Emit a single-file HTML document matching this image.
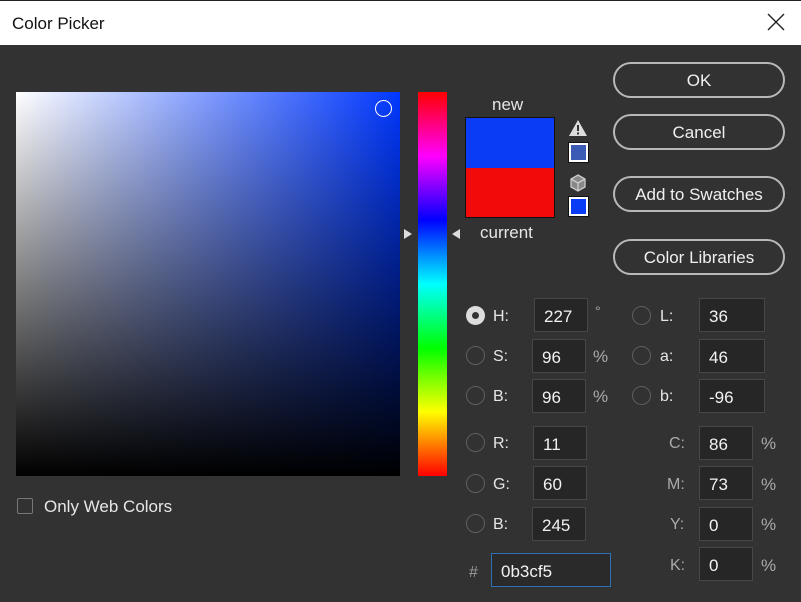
<!DOCTYPE html>
<html><head><style>
*{margin:0;padding:0;box-sizing:border-box}
body{width:801px;height:602px;background:#323232;font-family:"Liberation Sans",sans-serif;position:relative;overflow:hidden;color:#e8e8e8}
.a{position:absolute}
.t{position:absolute;font-size:16px;line-height:18px;color:#e6e6e6;margin-top:2px}
.btn{position:absolute;left:613px;width:172px;height:36px;border:2px solid #b8b8b8;border-radius:18px;text-align:center;line-height:34px;font-size:17px;color:#f0f0f0}
.in{position:absolute;height:34px;background:#262626;border:1px solid #474747;font-size:17px;line-height:35px;padding-left:9px;color:#f2f2f2}
.r{position:absolute;width:19px;height:19px;border:1px solid #5e5e5e;border-radius:50%}
.u{position:absolute;font-size:17px;color:#aaa;margin-top:1px}
</style></head><body>
<div class="a" style="left:0;top:0;width:801px;height:1px;background:#222"></div>
<div class="a" style="left:0;top:1px;width:801px;height:44px;background:#fff"></div>
<div class="a" style="left:12px;top:14px;font-size:17px;color:#111">Color Picker</div>
<svg class="a" style="left:766px;top:12px" width="20" height="20"><path d="M2 2L18 18M18 2L2 18" stroke="#222" stroke-width="1.4"/></svg>

<div class="a" style="left:16px;top:92px;width:384px;height:384px;background:linear-gradient(to bottom,rgba(0,0,0,0),#000),linear-gradient(to right,#fff,#0037ff)"></div>
<div class="a" style="left:375px;top:100px;width:17px;height:17px;border:1.5px solid #fff;border-radius:50%"></div>
<div class="a" style="left:418px;top:92px;width:29px;height:384px;background:linear-gradient(to bottom,#f00,#f0f 16.7%,#00f 33.3%,#0ff 50%,#0f0 66.7%,#ff0 83.3%,#f00)"></div>
<svg class="a" style="left:403px;top:228px" width="60" height="12"><path d="M1 1L9 6L1 11Z" fill="#ddd"/><path d="M57 1L49 6L57 11Z" fill="#ddd"/></svg>

<div class="t" style="left:492px;top:94px;font-size:17px">new</div>
<div class="a" style="left:465px;top:117px;width:90px;height:101px;border:1px solid #111">
<div style="height:50px;background:#0b3cf5"></div><div style="height:49px;background:#f20a0a"></div></div>
<div class="t" style="left:480px;top:222px;font-size:17px">current</div>
<svg class="a" style="left:568px;top:119px" width="20" height="18"><path d="M10 1L19 17H1Z" fill="#ddd"/><rect x="9" y="6" width="2" height="6" fill="#333"/><rect x="9" y="13.5" width="2" height="2" fill="#333"/></svg>
<div class="a" style="left:569px;top:143px;width:19px;height:19px;border:2px solid #fff;outline:1px solid #111;background:#3b5bb5"></div>
<svg class="a" style="left:568px;top:173px" width="20" height="20"><path d="M10 2L17 6V14L10 18L3 14V6Z" fill="#888" stroke="#ccc" stroke-width="1.3"/><path d="M3 6L10 10L17 6M10 10V18" stroke="#ccc" stroke-width="1.3" fill="none"/></svg>
<div class="a" style="left:569px;top:197px;width:19px;height:19px;border:2px solid #fff;outline:1px solid #111;background:#0b3cf5"></div>

<div class="btn" style="top:62px">OK</div>
<div class="btn" style="top:114px">Cancel</div>
<div class="btn" style="top:176px">Add to Swatches</div>
<div class="btn" style="top:239px">Color Libraries</div>

<div class="a" style="left:466px;top:306px;width:19px;height:19px;border-radius:50%;background:#ddd"><div style="margin:6px;width:7px;height:7px;border-radius:50%;background:#333"></div></div>
<div class="r" style="left:466px;top:346px"></div>
<div class="r" style="left:466px;top:386px"></div>
<div class="r" style="left:466px;top:433px"></div>
<div class="r" style="left:466px;top:474px"></div>
<div class="r" style="left:466px;top:514px"></div>
<div class="r" style="left:632px;top:306px"></div>
<div class="r" style="left:632px;top:346px"></div>
<div class="r" style="left:632px;top:386px"></div>

<div class="t" style="left:493px;top:306px">H:</div>
<div class="t" style="left:493px;top:346px">S:</div>
<div class="t" style="left:493px;top:386px">B:</div>
<div class="t" style="left:493px;top:433px">R:</div>
<div class="t" style="left:493px;top:474px">G:</div>
<div class="t" style="left:493px;top:514px">B:</div>
<div class="t" style="left:660px;top:306px">L:</div>
<div class="t" style="left:660px;top:346px">a:</div>
<div class="t" style="left:660px;top:386px">b:</div>
<div class="t" style="left:669px;top:433px;color:#aaa">C:</div>
<div class="t" style="left:667px;top:474px;color:#aaa">M:</div>
<div class="t" style="left:670px;top:514px;color:#aaa">Y:</div>
<div class="t" style="left:670px;top:555px;color:#aaa">K:</div>
<div class="t" style="left:469px;top:562px;color:#999">#</div>

<div class="in" style="left:534px;top:298px;width:54px">227</div>
<div class="in" style="left:532px;top:339px;width:54px">96</div>
<div class="in" style="left:532px;top:379px;width:54px">96</div>
<div class="in" style="left:533px;top:426px;width:54px">11</div>
<div class="in" style="left:533px;top:466px;width:54px">60</div>
<div class="in" style="left:532px;top:507px;width:54px">245</div>
<div class="in" style="left:699px;top:298px;width:66px">36</div>
<div class="in" style="left:699px;top:339px;width:66px">46</div>
<div class="in" style="left:699px;top:379px;width:66px">-96</div>
<div class="in" style="left:699px;top:426px;width:54px">86</div>
<div class="in" style="left:699px;top:466px;width:54px">73</div>
<div class="in" style="left:699px;top:507px;width:54px">0</div>
<div class="in" style="left:699px;top:547px;width:54px">0</div>
<div class="in" style="left:491px;top:553px;width:120px;border:1px solid #2f6fb5;background:#2a2a2a">0b3cf5</div>

<div class="u" style="left:595px;top:302px;font-size:14px">°</div>
<div class="u" style="left:593px;top:346px">%</div>
<div class="u" style="left:593px;top:386px">%</div>
<div class="u" style="left:761px;top:433px">%</div>
<div class="u" style="left:761px;top:474px">%</div>
<div class="u" style="left:761px;top:514px">%</div>
<div class="u" style="left:761px;top:555px">%</div>

<div class="a" style="left:17px;top:498px;width:16px;height:16px;border:1px solid #777;border-radius:2px"></div>
<div class="t" style="left:44px;top:496px;font-size:17px">Only Web Colors</div>
</body></html>
